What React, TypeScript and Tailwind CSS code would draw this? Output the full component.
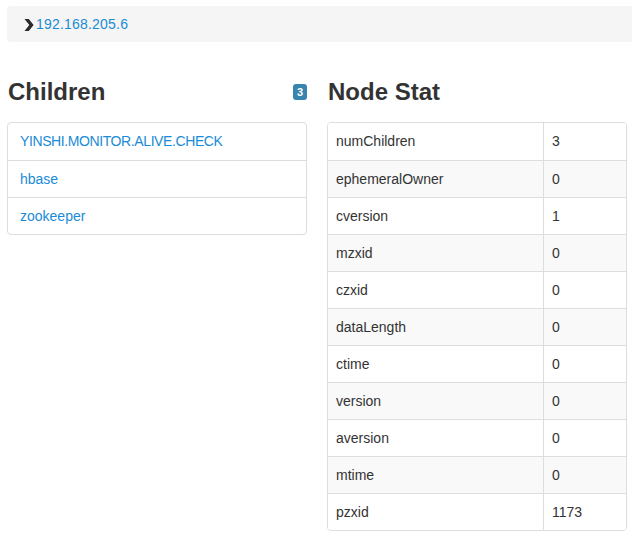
import React from "react";

const stats: [string, string][] = [
  ["numChildren", "3"],
  ["ephemeralOwner", "0"],
  ["cversion", "1"],
  ["mzxid", "0"],
  ["czxid", "0"],
  ["dataLength", "0"],
  ["ctime", "0"],
  ["version", "0"],
  ["aversion", "0"],
  ["mtime", "0"],
  ["pzxid", "1173"],
];

const children = ["YINSHI.MONITOR.ALIVE.CHECK", "hbase", "zookeeper"];

export default function App() {
  return (
    <div
      className="w-[632px] h-[540px] overflow-hidden bg-white text-[#333] text-[14px]"
      style={{ fontFamily: '"Liberation Sans", Arial, sans-serif' }}
    >
      <div className="pt-[6px] pl-[7px]">
        <div className="w-[660px] h-[36px] bg-[#f5f5f5] rounded-[4px] flex items-center pl-[17px]">
          <svg width="10" height="12" viewBox="0 0 10 12" className="mr-[2px] mt-[1px]">
            <path d="M0.5 0 L4.8 0 L9.6 6 L4.8 12 L0.5 12 L5.3 6 Z" fill="#2b2b2b" />
          </svg>
          <span className="text-[#1a8bd6] leading-[20px] tracking-[0.2px]">192.168.205.6</span>
        </div>
      </div>

      <div className="flex gap-[20px] pl-[7px] mt-[37px]">
        <div className="w-[300px]">
          <div className="flex items-center justify-between h-[24px] mt-[1px]">
            <h3 className="text-[24px] font-bold leading-[24px] text-[#333] ml-[1px]">Children</h3>
            <span className="bg-[#3a85ad] text-white text-[11px] font-bold rounded-[3px] w-[14px] h-[16px] flex items-center justify-center">
              3
            </span>
          </div>
          <div className="mt-[18px] border border-[#dddddd] rounded-[4px]">
            {children.map((c, i) => (
              <div
                key={c}
                className={`h-[37px] flex items-center pl-[12px] text-[#1a8bd6] ${i > 0 ? "border-t border-[#dddddd]" : ""} ${i === 0 ? "tracking-[-0.4px]" : ""}`}
              >
                {c}
              </div>
            ))}
          </div>
        </div>

        <div className="w-[300px]">
          <h3 className="text-[24px] font-bold leading-[24px] h-[24px] mt-[1px] text-[#333] ml-[1px]">Node Stat</h3>
          <div className="mt-[18px] border border-[#dddddd] rounded-[4px] overflow-hidden">
            {stats.map(([k, v], i) => (
              <div
                key={k}
                className={`flex h-[37px] ${i > 0 ? "border-t border-[#dddddd]" : ""} ${i % 2 === 1 ? "bg-[#f9f9f9]" : "bg-white"}`}
              >
                <div className="w-[216px] border-r border-[#dddddd] flex items-center pl-[8px]">{k}</div>
                <div className="flex-1 flex items-center pl-[8px]">{v}</div>
              </div>
            ))}
          </div>
        </div>
      </div>
    </div>
  );
}
